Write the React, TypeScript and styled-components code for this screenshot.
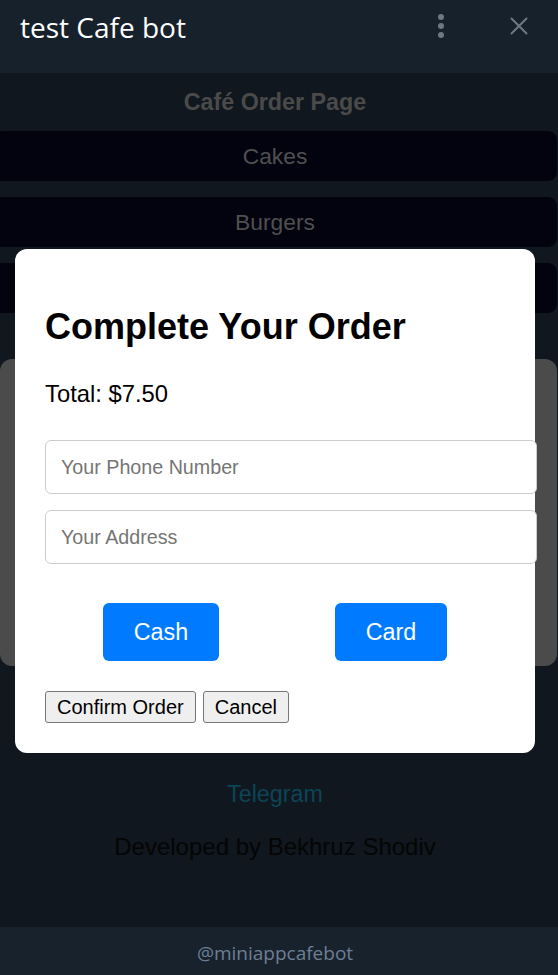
import React from "react";
import styled, { createGlobalStyle } from "styled-components";

const GlobalStyle = createGlobalStyle`
  html, body {
    margin: 0;
    padding: 0;
    background: #10171e;
    overflow: hidden;
  }
  body {
    font-family: "Liberation Sans", Arial, sans-serif;
  }
  * { box-sizing: border-box; }
`;

const Screen = styled.div`
  width: 558px;
  height: 975px;
  display: flex;
  flex-direction: column;
  overflow: hidden;
`;

const TopBar = styled.header`
  height: 73px;
  flex: none;
  background: #17212b;
  display: flex;
  align-items: flex-start;
  padding: 8px 30px 0 20px;
`;

const BotTitle = styled.div`
  flex: 1;
  font-family: "Open Sans", "Noto Sans", sans-serif;
  font-size: 28px;
  font-weight: 500;
  line-height: 38px;
  color: #ffffff;
`;

const TopIcons = styled.div`
  display: flex;
  align-items: center;
  gap: 65px;
  height: 26px;
  margin-top: 5px;
`;

const WebView = styled.main`
  flex: 1;
  background: #10171e;
  display: flex;
  flex-direction: column;
  padding-right: 8px;
  overflow: hidden;
`;

const PageTitle = styled.h1`
  margin: 16px 0 0;
  text-align: center;
  font-size: 23.3px;
  line-height: 27px;
  font-weight: 700;
  color: #4a4a4a;
`;

const CategoryList = styled.div`
  margin-top: 15px;
  display: flex;
  flex-direction: column;
  gap: 16px;
`;

const CategoryRow = styled.div`
  height: 50px;
  margin: 0 -7px 0 -7px;
  background: #03030f;
  border-radius: 9px;
  display: flex;
  align-items: center;
  justify-content: center;
  font-size: 22.8px;
  color: #4f4f4f;
`;

const ItemsPanel = styled.section`
  margin: 46px -7px 0 0;
  height: 307px;
  background: #4b4b4b;
  border-radius: 12px;
`;

const TelegramLink = styled.a`
  display: block;
  margin-top: 115px;
  text-align: center;
  font-size: 23.3px;
  line-height: 27px;
  color: #0b4556;
  text-decoration: none;
`;

const Credits = styled.p`
  margin: 25px 0 0;
  text-align: center;
  font-size: 24px;
  line-height: 27px;
  color: #050505;
`;

const BottomBar = styled.footer`
  height: 48px;
  flex: none;
  background: #18222d;
  display: flex;
  align-items: center;
  justify-content: center;
  padding: 4px 8px 0 0;
  font-family: "Open Sans", "Noto Sans", sans-serif;
  font-size: 19px;
  color: #6d7f94;
`;

const Modal = styled.div`
  position: fixed;
  left: 15px;
  top: 249px;
  width: 520px;
  padding: 30px;
  background: #ffffff;
  border-radius: 12px;
  z-index: 10;
`;

const ModalTitle = styled.h2`
  margin: 27px 0 0;
  font-size: 36px;
  line-height: 42px;
  font-weight: 700;
  color: #000;
`;

const Total = styled.p`
  margin: 32px 0 0;
  font-size: 23.8px;
  line-height: 27px;
  color: #000;
`;

const Field = styled.input<{ $gap: number }>`
  display: block;
  box-sizing: content-box;
  width: 100%;
  height: 22px;
  margin-top: ${(p) => p.$gap}px;
  padding: 15px;
  border: 1px solid #cccccc;
  border-radius: 6px;
  font-family: "Liberation Sans", Arial, sans-serif;
  font-size: 19.7px;
  color: #000;
  background: #fff;
  outline: none;
  &::placeholder {
    color: #757575;
  }
`;

const PaymentRow = styled.div`
  margin-top: 39px;
  display: flex;
  justify-content: space-around;
`;

const PayButton = styled.button`
  padding: 16px 31px;
  border: none;
  border-radius: 6px;
  background: #007bff;
  color: #ffffff;
  font-family: "Liberation Sans", Arial, sans-serif;
  font-size: 23.3px;
  line-height: 26px;
  cursor: pointer;
`;

const Actions = styled.div`
  margin-top: 30px;
  display: flex;
  gap: 7px;
`;

const PlainButton = styled.button`
  height: 32px;
  padding: 0 11px;
  border: 1px solid #767676;
  border-radius: 3px;
  background: #efefef;
  color: #000;
  font-family: "Liberation Sans", Arial, sans-serif;
  font-size: 20px;
  cursor: pointer;
`;

const DotsIcon = () => (
  <svg width="8" height="26" viewBox="0 0 8 26">
    <circle cx="4" cy="4" r="3" fill="#6c7883" />
    <circle cx="4" cy="13" r="3" fill="#6c7883" />
    <circle cx="4" cy="22" r="3" fill="#6c7883" />
  </svg>
);

const CloseIcon = () => (
  <svg width="18" height="18" viewBox="0 0 18 18">
    <path d="M1.5 1.5 L16.5 16.5 M16.5 1.5 L1.5 16.5" stroke="#6c7883" strokeWidth="2" strokeLinecap="round" />
  </svg>
);

export default function App() {
  return (
    <>
      <GlobalStyle />
      <Screen>
        <TopBar>
          <BotTitle>test Cafe bot</BotTitle>
          <TopIcons>
            <DotsIcon />
            <CloseIcon />
          </TopIcons>
        </TopBar>
        <WebView>
          <PageTitle>Café Order Page</PageTitle>
          <CategoryList>
            <CategoryRow>Cakes</CategoryRow>
            <CategoryRow>Burgers</CategoryRow>
            <CategoryRow>Drinks</CategoryRow>
          </CategoryList>
          <ItemsPanel />
          <TelegramLink href="#">Telegram</TelegramLink>
          <Credits>Developed by Bekhruz Shodiv</Credits>
        </WebView>
        <BottomBar>@miniappcafebot</BottomBar>
      </Screen>
      <Modal>
        <ModalTitle>Complete Your Order</ModalTitle>
        <Total>Total: $7.50</Total>
        <Field $gap={33} placeholder="Your Phone Number" />
        <Field $gap={16} placeholder="Your Address" />
        <PaymentRow>
          <PayButton>Cash</PayButton>
          <PayButton>Card</PayButton>
        </PaymentRow>
        <Actions>
          <PlainButton>Confirm Order</PlainButton>
          <PlainButton>Cancel</PlainButton>
        </Actions>
      </Modal>
    </>
  );
}
